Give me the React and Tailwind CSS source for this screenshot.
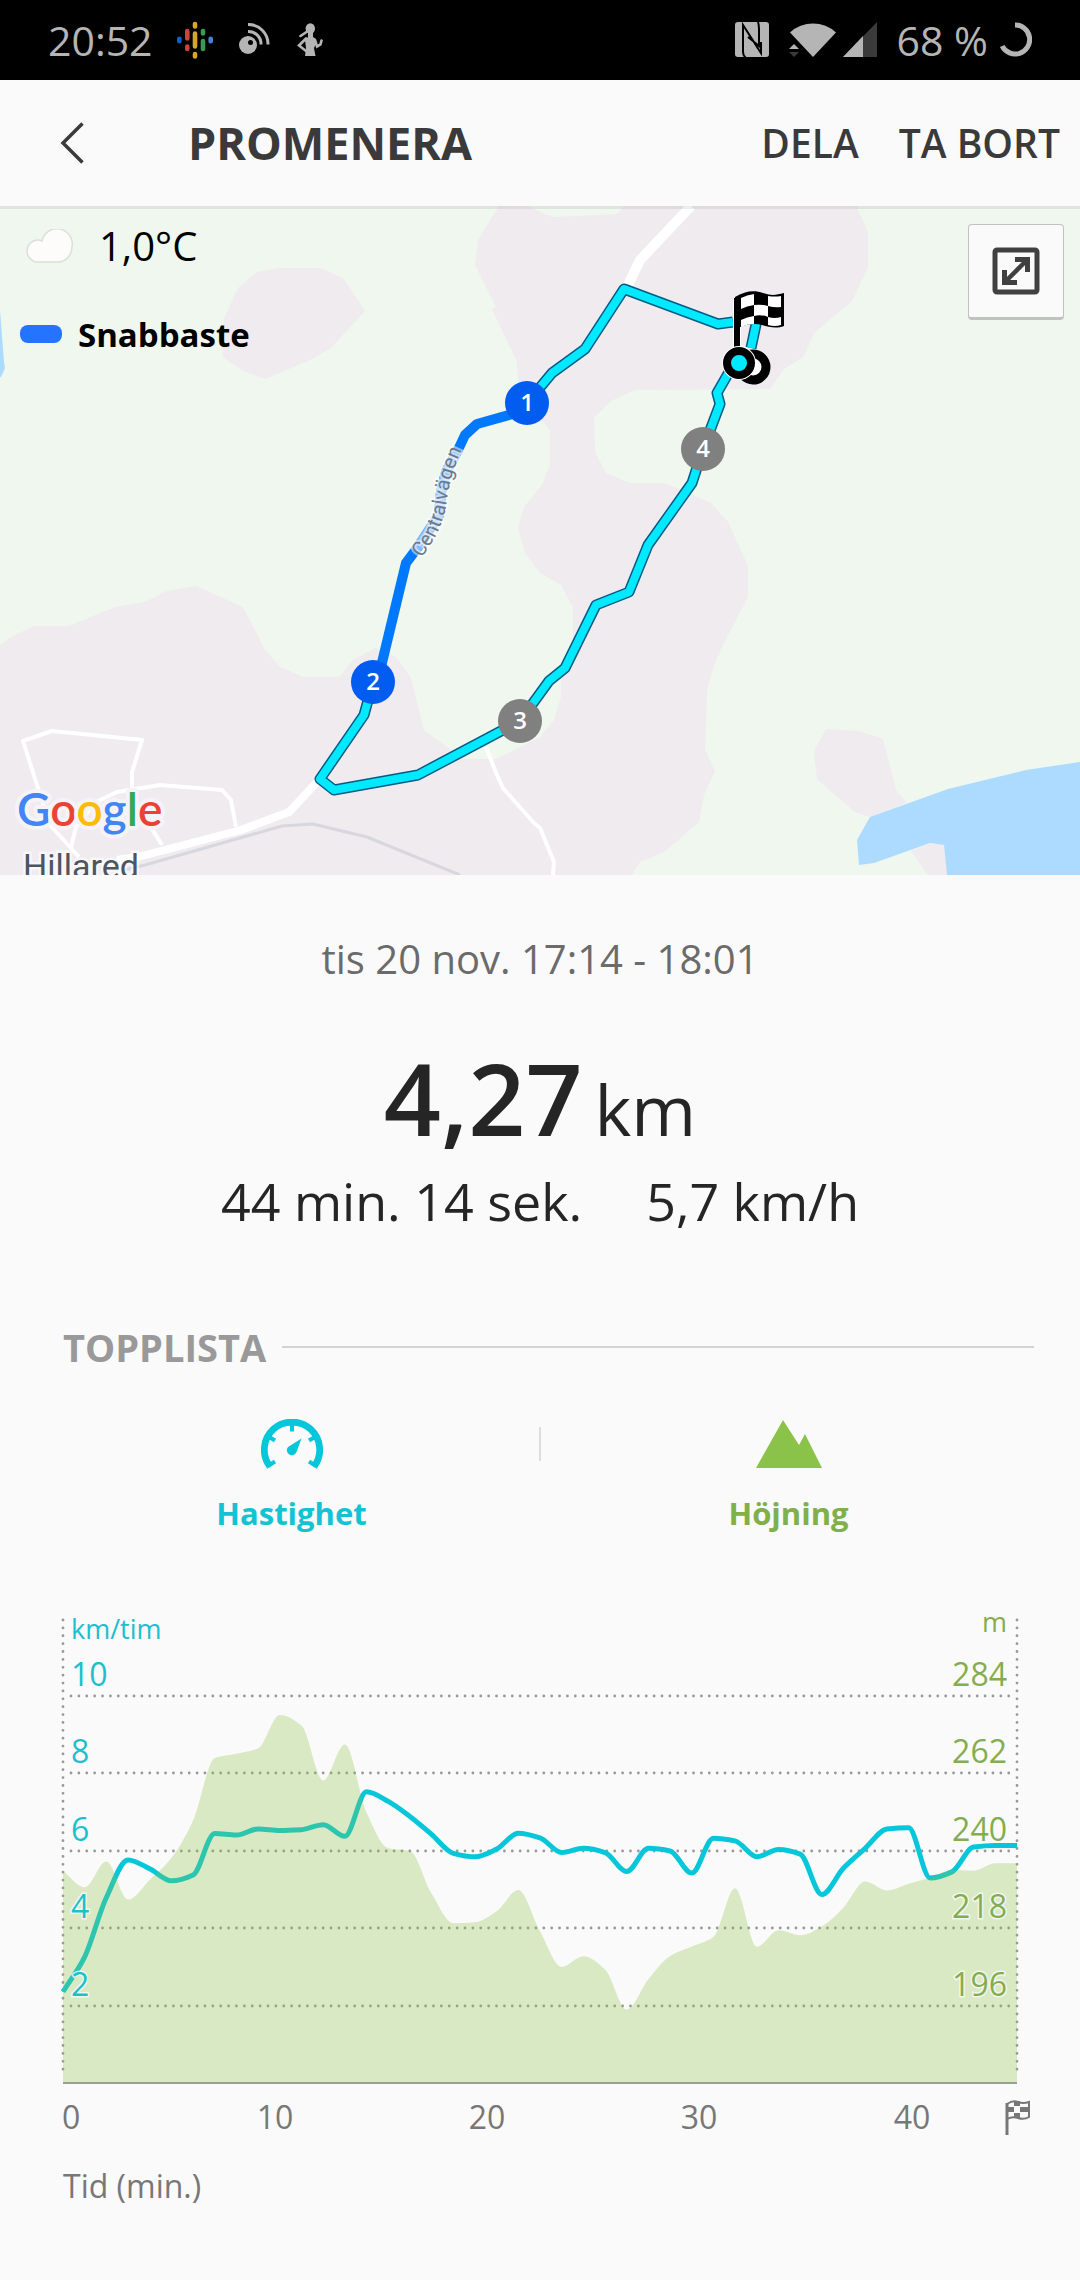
const SPEED = [
  2.37, 3.27, 4.8, 5.77, 5.54, 5.23, 5.38, 6.45, 6.41, 6.57, 6.53, 6.55, 6.68, 6.38, 7.53,
  7.28, 6.89, 6.43, 5.94, 5.85, 6.05, 6.46, 6.34, 5.96, 6.07, 5.96, 5.47, 6.07, 6.0, 5.43,
  6.33, 6.26, 5.85, 6.04, 5.92, 4.88, 5.56, 6.07, 6.57, 6.6, 5.3, 5.46, 6.1, 6.14, 6.14,
];

const ELEVATION = [
  234.3, 229.7, 237, 226.2, 231.8, 238, 248.7, 266.4, 267.6, 269.1, 278.6, 275.6, 260, 270.2, 250.9,
  240.8, 240, 227.9, 219.5, 219.8, 222.9, 228.9, 217.2, 207.1, 210.1, 206.4, 195, 203.6, 210.2, 212.9,
  215.6, 229.4, 212.8, 217.5, 216.1, 218.6, 224, 231.3, 228.8, 230.7, 232.4, 234.6, 234.4, 236.5, 236.5,
];

const GRID = [
  { speed: 10, elevation: 284, y: 87 },
  { speed: 8, elevation: 262, y: 164 },
  { speed: 6, elevation: 240, y: 242 },
  { speed: 4, elevation: 218, y: 319 },
  { speed: 2, elevation: 196, y: 397 },
];

const MINUTES = [
  { label: "0", x: 62, anchor: "start" },
  { label: "10", x: 275, anchor: "middle" },
  { label: "20", x: 487, anchor: "middle" },
  { label: "30", x: 699, anchor: "middle" },
  { label: "40", x: 912, anchor: "middle" },
];

const LEFT = 63;
const RIGHT = 1017;
const BASE = 474;

const speedY = (v) => 87 + (10 - v) * 38.75;
const elevationY = (v) => 87 + (284 - v) * (77.5 / 22);

// monotone cubic, flat at peaks and valleys
function smoothPath(values, toY) {
  const step = (RIGHT - LEFT) / (values.length - 1);
  const pts = values.map((v, i) => [LEFT + i * step, toY(v)]);
  const slopes = pts.slice(1).map((p, i) => (p[1] - pts[i][1]) / step);
  const tangents = pts.map((_, i) => {
    if (i === 0) return slopes[0];
    if (i === pts.length - 1) return slopes[i - 1];
    const a = slopes[i - 1];
    const b = slopes[i];
    return a * b <= 0 ? 0 : (2 * a * b) / (a + b);
  });
  let d = `M${pts[0][0]} ${pts[0][1].toFixed(1)}`;
  for (let i = 1; i < pts.length; i++) {
    const [x0, y0] = pts[i - 1];
    const [x1, y1] = pts[i];
    const c0 = (y0 + (tangents[i - 1] * step) / 3).toFixed(1);
    const c1 = (y1 - (tangents[i] * step) / 3).toFixed(1);
    d += `C${(x0 + step / 3).toFixed(1)} ${c0} ${(x1 - step / 3).toFixed(1)} ${c1} ${x1.toFixed(1)} ${y1.toFixed(1)}`;
  }
  return d;
}

function StatusBar() {
  return (
    <div className="flex h-20 items-center bg-black px-12 text-[41px] leading-none text-[#b5b5b5]">
      <span>20:52</span>
      <svg className="ml-6 h-[38px] w-9" viewBox="0 0 36 38" strokeWidth="4.6" strokeLinecap="round" fill="none">
        <path d="M2.3 17.8v2.4" stroke="#0f62c4" />
        <path d="M10.3 10v7.4M10.3 25.5v2.5" stroke="#c9453a" />
        <path d="M18 3v2.5M18 12.5v13M18 33v2.5" stroke="#d9a528" />
        <path d="M26 10v2.5M26 20v8" stroke="#3b9a52" />
        <path d="M33.7 17.8v2.4" stroke="#4a7fd8" />
      </svg>
      <svg className="ml-6 h-9 w-9" viewBox="0 0 36 36" fill="none" stroke="#b5b5b5" strokeWidth="3">
        <circle cx="11" cy="23" r="9" fill="#b5b5b5" stroke="none" />
        <circle cx="13.5" cy="20.5" r="2.5" fill="#000" stroke="none" />
        <path d="M11 9.5A12.5 12.5 0 0 1 24 22.5M11 2.5A19.5 19.5 0 0 1 31 22.5" />
      </svg>
      <svg className="ml-6 h-[34px] w-[26px]" viewBox="0 0 26 34" fill="#b5b5b5">
        <ellipse cx="13.3" cy="5.5" rx="4.7" ry="5.3" />
        <path d="M11 9h5v5l3 2v5l-2 4 1.5 8H8l1-8-1-8 3-3z" />
        <path d="M3.5 13L9.5 9M9 15.5L2 22.5 9 28M18 17L20 23.5 23.5 21.5 24.5 17.5" fill="none" stroke="#b5b5b5" strokeWidth="2.6" strokeLinecap="round" />
      </svg>
      <div className="flex-1" />
      <svg className="h-9 w-[34px]" viewBox="0 0 34 36">
        <rect width="34" height="35" rx="3" fill="#b5b5b5" />
        <path d="M11 36Q8 34 8 30V3L26 31V20M23 0Q24 3 24 7V24L13 15" fill="none" stroke="#000" strokeWidth="2" />
      </svg>
      <svg className="ml-5 h-9 w-12" viewBox="0 0 48 36">
        <path d="M1 10.5A34 34 0 0 1 47 10.5L24 35z" fill="#b5b5b5" />
        <path d="M0 27l5-5 5 5z" fill="#b5b5b5" />
        <path d="M0 30h10l-5 5z" fill="#3a3a3a" />
      </svg>
      <svg className="ml-[6px] h-9 w-[34px]" viewBox="0 0 34 36">
        <path d="M34 0v35H0z" fill="#3a3a3a" />
        <path d="M20 14v21H0z" fill="#b5b5b5" />
      </svg>
      <span className="ml-5">68 %</span>
      <svg className="ml-3 h-9 w-8" viewBox="0 0 32 36">
        <path d="M15 3a14.5 14.5 0 1 1-12.8 21" fill="none" stroke="#b5b5b5" strokeWidth="5" />
      </svg>
    </div>
  );
}

function Header() {
  return (
    <header className="flex h-[126px] items-center bg-[#fafafa] pr-5 pl-10 font-semibold text-[#3a3a3a]">
      <button type="button" aria-label="Tillbaka" className="flex h-16 w-16 items-center justify-center">
        <svg className="h-[42px] w-6" viewBox="0 0 24 42" fill="none" stroke="currentColor" strokeWidth="3.5">
          <path d="M22.5 1.5L3 21 22.5 40.5" />
        </svg>
      </button>
      <h1 className="ml-[84px] flex-1 text-[45px] font-bold">PROMENERA</h1>
      <button type="button" className="text-[39px]">DELA</button>
      <button type="button" className="ml-10 text-[39px]">TA BORT</button>
    </header>
  );
}

const MARKERS = [
  { n: 1, x: 527, y: 403, fill: "#025cf0" },
  { n: 2, x: 373, y: 682, fill: "#025cf0" },
  { n: 3, x: 520, y: 721, fill: "#808080" },
  { n: 4, x: 703, y: 449, fill: "#808080" },
];

const ROUTE =
  "M733 322L718 324 624 289 585 349 552 373 527 403M373 682L364 715 320 779 334 790 418 775 520 721 549 681 565 668 596 605 629 592 648 545 692 483 703 449 720 404 717 393 736 360M751 348L758 315";

function RouteMap() {
  return (
    <section className="relative overflow-hidden">
      <svg className="block h-auto w-full" viewBox="0 206 1080 669">
        <rect y="206" width="1080" height="669" fill="#eff7ee" />
        <g fill="#efebef">
          <path d="M257 272L279 268H320L343 278 356 297 365 311 331 348 310 360 265 379 243 371 223 357 222 338 224 318 238 288z" />
          <path d="M499 206L478 240 475 265 496 307 492 309 517 362 518 382 540 418 550 430V465L542 485 524 507 518 528 525 553 540 573 561 585 573 607V640L561 668V697L554 720 540 737 496 759H463L424 730 411 678 396 657 375 648 353 660 339 677H303L280 667 265 650 243 607 196 586 167 591 145 602 115 607 69 626H34L9 638 0 645V875H632L640 862 664 852 699 822 704 795 715 771 705 749 707 690 714 665 722 647 748 597V566L736 540 728 522 711 503 681 490 664 483H630L606 473 595 452 594 418 611 401 635 390 770 389 784 369 803 357 815 332 852 301 868 267V232L858 210V206H624L617 214 580 216 552 217 527 206z" />
          <path d="M826 729L859 731 883 739 896 790 907 803 870 817 855 812 817 779 814 751z" />
          <path d="M911 851L930 843 944 845 947 875H928z" />
        </g>
        <path d="M0 310L4 362 5 368 1 377H0zM870 817L948 789 1026 770 1080 762V875H947L944 845 930 843 874 863 859 865 857 840z" fill="#addbff" />

        {/* Roads and railway */}
        <path d="M124 870L145 865 282 826 313 824 367 837 460 875" fill="none" stroke="#d8d7de" strokeWidth="3" />
        <g fill="none" stroke="#fff" strokeLinejoin="round">
          <path d="M691 206L640 260 628 285" strokeWidth="10" />
          <path d="M320 779L289 812 241 830 138 857 117 860" strokeWidth="8" />
          <path d="M79 857L50 825 38 788 23 741 52 731 142 740 132 772V797L162 845M71 847L76 827 96 802 117 792 160 785 222 790 231 800 236 827M486 747L496 773 503 788 534 823 540 828 554 862 553 875" strokeWidth="4" />
        </g>

        {/* Route */}
        <g fill="none" strokeLinejoin="round">
          <path d={ROUTE} stroke="#005b85" strokeWidth="11" />
          <path d={ROUTE} stroke="#00e9ff" strokeWidth="8" />
          <path d="M527 410L477 424 465 435 458 450 446 472 441 492 439 515 418 547 406 563 373 700" stroke="#0079ff" strokeWidth="10" />
          <path d="M458 450L446 472 441 492 439 515 415 551" stroke="#84b9f9" strokeWidth="10" />
        </g>
        <path id="centralvagen" d="M421 558Q443 531 447 500T466 442" fill="none" />
        <text className="font-['Roboto']" fontSize="20" fill="#6c7a88" stroke="#fff" strokeOpacity="0.5" strokeWidth="4" paintOrder="stroke">
          <textPath href="#centralvagen">Centralvägen</textPath>
        </text>

        {MARKERS.map((m) => (
          <g key={m.n}>
            <circle cx={m.x} cy={m.y} r="22" fill={m.fill} />
            <text x={m.x} y={m.y + 8} textAnchor="middle" fontSize="24" fontWeight="600" fill="#fff">{m.n}</text>
          </g>
        ))}

        {/* Finish and current position */}
        <circle cx="753" cy="367" r="13" fill="#fff" stroke="#000" strokeWidth="9" />
        <path d="M737 298V350" stroke="#fff" strokeWidth="8" />
        <path d="M737 298V350" stroke="#000" strokeWidth="6" />
        <path d="M735 297C745 291 754 290 763 293S776 295 784 293V326C776 329 769 327 762 325S746 324 738 328z" fill="#000" />
        <path d="M741 298Q747 295 754 294V305Q747 306 741 309zM768 296Q775 297 781 296V307Q775 308 768 306zM754 305Q761 304 768 306V317Q761 314 754 316zM741 320Q747 317 754 316V324Q747 324 741 327zM768 317Q775 319 781 317V325Q775 327 768 325z" fill="#fff" />
        <circle cx="739" cy="363" r="17" fill="#fff" />
        <circle cx="739" cy="363" r="12" fill="#00e9ff" stroke="#000" strokeWidth="8" />

        <text x="23" y="878" className="font-['Roboto']" fontSize="34" fill="#4c5560" stroke="#fff" strokeOpacity="0.6" strokeWidth="5" paintOrder="stroke">Hillared</text>
        <text x="17" y="826" className="font-['Lato']" fontSize="46" fontWeight="600" stroke="#f5f3f7" strokeWidth="8" strokeLinejoin="round" paintOrder="stroke">
          <tspan fill="#4285f4">G</tspan>
          <tspan fill="#ea4335">o</tspan>
          <tspan fill="#fbbc05">o</tspan>
          <tspan fill="#4285f4">g</tspan>
          <tspan fill="#34a853">l</tspan>
          <tspan fill="#ea4335">e</tspan>
        </text>
        <rect y="206" width="1080" height="3" fill="#000" fillOpacity="0.07" />
      </svg>

      <div className="absolute top-4 left-5 text-black">
        <div className="flex h-12 items-center">
          <svg className="ml-[6px] h-[34px] w-[47px]" viewBox="0 0 47 34">
            <path d="M12 33a11 11 0 0 1 0-22q2 0 4 1A15 15 0 0 1 46 18a15 15 0 0 1-13 15z" fill="#fdfcfb" stroke="#dcdfda" strokeWidth="1.5" />
          </svg>
          <span className="ml-[26px] text-[40px] leading-none">1,0°C</span>
        </div>
        <div className="mt-10 flex h-12 items-center">
          <span className="h-[18px] w-[42px] rounded-lg bg-[#2374ff]" />
          <span className="ml-4 text-[33px] leading-none font-bold">Snabbaste</span>
        </div>
      </div>

      <button type="button" aria-label="Visa hela kartan" className="absolute top-[18px] right-4 flex h-24 w-24 items-center justify-center rounded border border-b-[3px] border-[#bfc3bf] bg-[#fafafa]">
        <svg className="h-12 w-12" viewBox="0 0 48 48" fill="none" stroke="#404040">
          <rect x="3" y="3" width="42" height="42" rx="2" strokeWidth="5" />
          <path d="M15 33L33 15" strokeWidth="4.5" />
          <path d="M23 12.5H35.5V25M12.5 23V35.5H25" strokeWidth="5" />
        </svg>
      </button>
    </section>
  );
}

function Summary() {
  return (
    <section className="flex flex-col items-center pt-14 text-[#252525]">
      <p className="text-[40px] leading-[56px] text-[#6b6b6b]">tis 20 nov. 17:14 - 18:01</p>
      <p className="mt-[60px] flex items-baseline gap-3 leading-[100px]">
        <span className="text-[100px] font-semibold">4,27</span>
        <span className="text-[70px]">km</span>
      </p>
      <p className="mt-2 flex gap-16 text-[52px] leading-[68px]">
        <span>44 min. 14 sek.</span>
        <span>5,7 km/h</span>
      </p>
    </section>
  );
}

function TopList() {
  return (
    <section className="mt-[84px] font-bold">
      <div className="flex items-center gap-4 pr-[46px] pl-[63px]">
        <h2 className="text-[38px] leading-[56px] text-[#999]">TOPPLISTA</h2>
        <div className="h-[2px] flex-1 bg-[#d3d3d3]" />
      </div>
      <div className="mt-11 flex px-11">
        <button type="button" className="flex flex-1 flex-col items-center text-[31px] text-[#15c2d3]">
          <svg className="h-[50px] w-[62px]" viewBox="0 0 62 50" fill="none" stroke="#06c6da">
            <path d="M9 47.6A27.7 27.7 0 1 1 53 47.6" strokeWidth="6.8" />
            <path d="M31 5v7.5M9 18.5l5 3M53 18.5l-5 3M7 47l7-4.5M55 47l-7-4.5" strokeWidth="4" />
            <path d="M40.5 19.5L35.5 33a5 5 0 1 1-8.5-5z" fill="#06c6da" stroke="none" />
          </svg>
          <span className="mt-5 leading-[48px]">Hastighet</span>
        </button>
        <span className="mt-2 h-[34px] w-[2px] bg-[#ddd]" />
        <button type="button" className="flex flex-1 flex-col items-center text-[31px] text-[#80b04a]">
          <svg className="h-[50px] w-[66px]" viewBox="0 0 66 50">
            <path d="M0 49L27 1 43 26 49 15 66 49z" fill="#8bc34a" />
          </svg>
          <span className="mt-5 leading-[48px]">Höjning</span>
        </button>
      </div>
    </section>
  );
}

function Chart() {
  const elevation = smoothPath(ELEVATION, elevationY);
  return (
    <svg className="mt-[60px] block h-auto w-full" viewBox="0 -12 1080 632">
      <g stroke="#999" strokeWidth="2.8" strokeLinecap="round" fill="none">
        {GRID.map((g) => (
          <path key={g.y} d={`M71 ${g.y}H1012`} strokeDasharray="0 7.88" />
        ))}
        <path d="M63 11V468M1017 11V468" strokeDasharray="0 7.88" />
      </g>
      <path d={smoothPath(SPEED, speedY)} fill="none" stroke="#06c6da" strokeWidth="5" />
      <path d={`${elevation}V${BASE}H${LEFT}Z`} fill="#8bc34a" fillOpacity="0.3" />
      <path d={`M${LEFT} ${BASE}H${RIGHT}`} stroke="#9aa094" strokeWidth="2" />

      <g stroke="#fafafa" strokeOpacity="0.8" strokeWidth="3" paintOrder="stroke" fontSize="32">
        <g fill="#1dbfce">
          <text x="71" y="30" fontSize="27">km/tim</text>
          {GRID.map((g) => (
            <text key={g.speed} x="71" y={g.y - 10}>{g.speed}</text>
          ))}
        </g>
        <g fill="#84ad51" textAnchor="end">
          <text x="1007" y="23" fontSize="27">m</text>
          {GRID.map((g) => (
            <text key={g.elevation} x="1007" y={g.y - 10}>{g.elevation}</text>
          ))}
        </g>
      </g>

      <g fontSize="32" fill="#777">
        {MINUTES.map((m) => (
          <text key={m.label} x={m.x} y="520" textAnchor={m.anchor}>{m.label}</text>
        ))}
        <text x="63" y="589">Tid (min.)</text>
      </g>

      <g fill="none" stroke="#777">
        <path d="M1007 494V526" strokeWidth="3" />
        <path d="M1007 495Q1013 491 1018 493T1029 493V508Q1024 511 1018 509T1007 510" strokeWidth="2" />
      </g>
      <path d="M1014 492h6v5h-6zM1008 498h6v5h-6zM1020 498h9v5h-9zM1014 504h6v5h-6z" fill="#777" />
    </svg>
  );
}

export default function App() {
  return (
    <div className="min-h-screen bg-[#fafafa] font-['Open_Sans','Noto_Sans',sans-serif]">
      <StatusBar />
      <Header />
      <main>
        <RouteMap />
        <Summary />
        <TopList />
        <Chart />
      </main>
    </div>
  );
}
